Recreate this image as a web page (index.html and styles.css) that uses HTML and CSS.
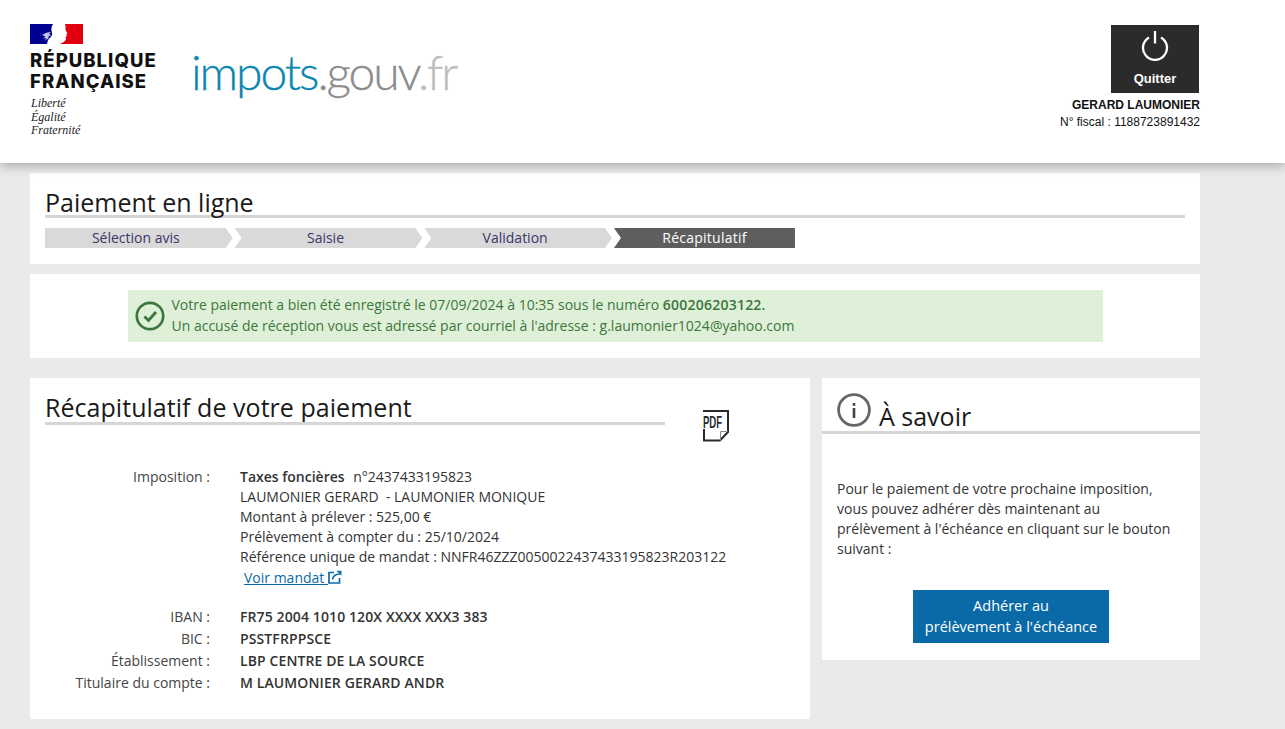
FILE: index.html
```html
<!DOCTYPE html>
<html lang="fr">
<head>
<meta charset="utf-8">
<title>Paiement en ligne</title>
<link rel="stylesheet" href="styles.css">
</head>
<body>
<header class="top">
  <div class="rf">
    <svg class="flag" width="53" height="20" viewBox="0 0 53 20"><rect width="53" height="20" fill="#fff"/><path d="M0 0H23C21 3 21 6 22 9C23 11 20 14 18 16L17 20H0z" fill="#000091"/><path d="M35 0H53V20H29.500C32 19 35 18 36 15.500L35.500 13L37 12L36 10.500L37.500 9.500L35.500 6C35.500 3 35.500 1 35 0z" fill="#e1000f"/><path d="M12 11C15 9 18 8 21 8L19 10L21 11L18 13L19 14L15 16.500L16.500 14L13 14.500L15.500 12.500z" fill="#c4c4e6"/></svg>
    <div class="rf-name">RÉPUBLIQUE<br>FRANÇAISE</div>
    <div class="rf-motto">Liberté<br>Égalité<br>Fraternité</div>
  </div>
  <div class="site"><span class="site-a">impots</span><span class="site-b">.gouv</span><span class="site-c">.fr</span></div>
  <div class="user">
    <a class="quit">
      <svg width="30" height="30" viewBox="0 0 30 30" fill="none" stroke="#fff" stroke-width="2.300"><path d="M9 6.500a12 12 0 1 0 12 0"/><path d="M15 0v12.500"/></svg>
      <span>Quitter</span>
    </a>
    <div class="user-name">GERARD LAUMONIER</div>
    <div class="user-id">N° fiscal : 1188723891432</div>
  </div>
</header>
<main class="page">
  <section class="panel head-panel">
    <h1 class="title">Paiement en ligne</h1>
    <ol class="steps">
      <li class="step step-first">Sélection avis</li>
      <li class="step">Saisie</li>
      <li class="step">Validation</li>
      <li class="step step-last">Récapitulatif</li>
    </ol>
  </section>
  <section class="panel msg-panel">
    <div class="msg">
      <svg class="msg-ico" width="30" height="30" viewBox="0 0 30 30" fill="none" stroke="#3c763d"><circle cx="15" cy="15" r="13.200" stroke-width="2.700"/><path d="M9.500 15.500l4 4 7.500-8.500" stroke-width="2.900"/></svg>
      <p class="msg-text">Votre paiement a bien été enregistré le 07/09/2024 à 10:35 sous le numéro <b>600206203122.</b><br>Un accusé de réception vous est adressé par courriel à l'adresse : g.laumonier1024@yahoo.com</p>
    </div>
  </section>
  <div class="cols">
    <section class="panel recap">
      <div class="recap-head">
        <h2 class="recap-title">Récapitulatif de votre paiement</h2>
        <svg class="pdf" width="26" height="32" viewBox="0 0 26 32"><path d="M0 1H25V22L17 30.500H1V19" fill="none" stroke="#2b2b2b" stroke-width="2"/><path d="M25 21.500H17.500V30.500" fill="none" stroke="#8a8a8a" stroke-width="1"/><text class="pdf-text" transform="translate(0 18) scale(.58 1)">PDF</text></svg>
      </div>
      <dl class="info">
        <dt>Imposition :</dt>
        <dd>
          <div><strong class="tax">Taxes foncières</strong>  n°2437433195823</div>
          <div>LAUMONIER GERARD&nbsp; - LAUMONIER MONIQUE</div>
          <div>Montant à prélever : 525,00 €</div>
          <div>Prélèvement à compter du : 25/10/2024</div>
          <div>Référence unique de mandat : NNFR46ZZZ0050022437433195823R203122</div>
          <a class="mandat"><span class="mandat-link">Voir mandat <svg width="14" height="14" viewBox="0 0 14 14" fill="none" stroke="#0a6aa8" stroke-width="1.700"><path d="M6 2.500H1v10.500h10.500V8"/><path d="M4.500 9.500C5 6 7.500 4 12 4"/><path d="M8.500 .8h5v5z" fill="#0a6aa8" stroke="none"/></svg></span></a>
        </dd>
      </dl>
      <dl class="info bank">
        <dt>IBAN :</dt><dd><strong>FR75 2004 1010 120X XXXX XXX3 383</strong></dd>
        <dt>BIC :</dt><dd><strong>PSSTFRPPSCE</strong></dd>
        <dt>Établissement :</dt><dd><strong>LBP CENTRE DE LA SOURCE</strong></dd>
        <dt>Titulaire du compte :</dt><dd><strong>M LAUMONIER GERARD ANDR</strong></dd>
      </dl>
    </section>
    <aside class="panel side">
      <div class="side-head">
        <svg width="34" height="34" viewBox="0 0 34 34" fill="none" stroke="#666"><circle cx="17" cy="17" r="15.400" stroke-width="2.800"/><path d="M17 15v10" stroke="#444" stroke-width="2.600"/><path d="M17 10v2.800" stroke="#444" stroke-width="2.600"/></svg>
        <h2 class="side-title">À savoir</h2>
      </div>
      <p class="side-text">Pour le paiement de votre prochaine imposition, vous pouvez adhérer dès maintenant au prélèvement à l'échéance en cliquant sur le bouton suivant :</p>
      <a class="cta">Adhérer au<br>prélèvement à l'échéance</a>
    </aside>
  </div>
</main>
</body>
</html>
```
FILE: styles.css
```css
* { box-sizing: border-box; }
html, body { margin: 0; height: 100%; overflow: hidden; }
body { background: #eaeaea; font-family: "Open Sans", sans-serif; font-size: 14px; line-height: 20px; color: #333; }

.top { height: 163px; background: #fff; display: flex; box-shadow: 0 3px 10px rgba(0,0,0,.28); position: relative; padding: 24px 85px 0 30px; }
.rf { width: 161px; flex: none; margin-right: 2px; }
.flag { display: block; }
.rf-name { font-family: Inter, sans-serif; font-weight: 800; font-size: 18.500px; line-height: 21px; color: #111; margin-top: 6px; letter-spacing: 1.050px; white-space: nowrap; }
.rf-motto { font-family: "Liberation Serif", serif; font-style: italic; font-size: 12px; line-height: 13.500px; color: #222; margin-top: 5px; padding-left: 1px; }
.site { font-family: Lato, sans-serif; font-weight: 300; font-size: 48px; line-height: 56px; margin: 20px 0 0 -2px; letter-spacing: -2.100px; white-space: nowrap; -webkit-text-stroke: .3px currentColor; }
.site-a { color: #0a86b0; }
.site-b { color: #8c8c8c; }
.site-c { color: #bdbdbd; }
.user { margin-left: auto; display: flex; flex-direction: column; align-items: flex-end; font-family: "Liberation Sans", sans-serif; font-size: 12px; line-height: 17px; color: #111; }
.quit { width: 88px; height: 68px; margin: 1px 1px 0 0; background: #2b2b2b; color: #fff; display: flex; flex-direction: column; align-items: center; padding-top: 6px; font-size: 13px; font-weight: 700; }
.quit svg { display: block; }
.quit span { line-height: 16px; margin-top: 10px; }
.user-name { font-weight: 700; font-size: 12px; margin-top: 3px; line-height: 18px; }
.user-id { line-height: 16px; }

.page { padding: 10px 85px 0 30px; }
.panel { background: #fff; }
.head-panel { height: 91px; padding: 12px 15px 0; }
.title { margin: 0; font-size: 25px; font-weight: 400; color: #1a1a1a; border-bottom: 3px solid #d6d6d6; height: 33px; line-height: 34px; }
.steps { list-style: none; margin: 10px 0 0; padding: 0; display: flex; gap: 2px; }
.step { width: 187.670px; height: 20px; background: #d9d9d9; color: #3a3668; text-align: center; line-height: 20px; clip-path: polygon(0 0, calc(100% - 7px) 0, 100% 50%, calc(100% - 7px) 100%, 0 100%, 7px 50%); padding-right: 6px; }
.step-first { clip-path: polygon(0 0, calc(100% - 7px) 0, 100% 50%, calc(100% - 7px) 100%, 0 100%); }
.step-last { width: 181px; background: #5e5e5e; color: #fff; clip-path: polygon(0 0, 100% 0, 100% 100%, 0 100%, 7px 50%); padding-right: 0; letter-spacing: .25px; }

.msg-panel { height: 84px; margin-top: 10px; padding: 16px 97px 0 98px; }
.msg { height: 52px; background: #dff0d8; display: flex; align-items: center; padding-left: 7px; color: #3c763d; }
.msg-ico { flex: none; }
.msg-text { margin: 0 0 0 6.500px; line-height: 21px; position: relative; top: -1px; }
.msg-text b { font-weight: 600; letter-spacing: .23px; }

.cols { display: flex; gap: 12px; margin-top: 20px; align-items: flex-start; }
.recap { width: 780px; height: 341px; padding: 0 15px; }
.recap-head { display: flex; height: 80px; }
.recap-title { width: 620px; height: 47px; margin: 0; font-size: 25px; font-weight: 400; line-height: 59px; letter-spacing: .04px; color: #1a1a1a; border-bottom: 3px solid #d6d6d6; overflow: hidden; flex: none; }
.pdf { margin: 32px 0 0 37.500px; flex: none; overflow: visible; }
.pdf-text { font-family: "Liberation Sans", sans-serif; font-size: 16.500px; font-weight: 700; fill: #2b2b2b; }
.info { margin: 9px 0 0; display: grid; grid-template-columns: 165px 1fr; column-gap: 30px; }
.info dt { text-align: right; color: #444; }
.info dd { margin: 0; }
.info strong { font-weight: 600; letter-spacing: .11px; }
.info strong.tax { margin-right: 5px; letter-spacing: 0; }
.mandat { display: block; padding-left: 4px; margin-top: 1px; color: #0a6aa8; }
.mandat-link { text-decoration: underline; }
.mandat svg { vertical-align: -1px; }
.bank { margin-top: 19px; row-gap: 2px; }

.side { width: 378px; height: 282px; }
.side-head { display: flex; align-items: flex-start; height: 56px; padding: 15px 0 0 15px; border-bottom: 3px solid #d6d6d6; }
.side-title { margin: 0 0 0 8px; font-size: 25px; font-weight: 400; line-height: 30px; color: #1a1a1a; padding-top: 8px; }
.side-text { margin: 45px 15px 0; color: #333; }
.cta { display: block; width: 196px; height: 53px; margin: 31px auto 0; background: #0a6aa8; color: #fff; text-align: center; padding-top: 5px; line-height: 21px; font-size: 14.500px; }
```
